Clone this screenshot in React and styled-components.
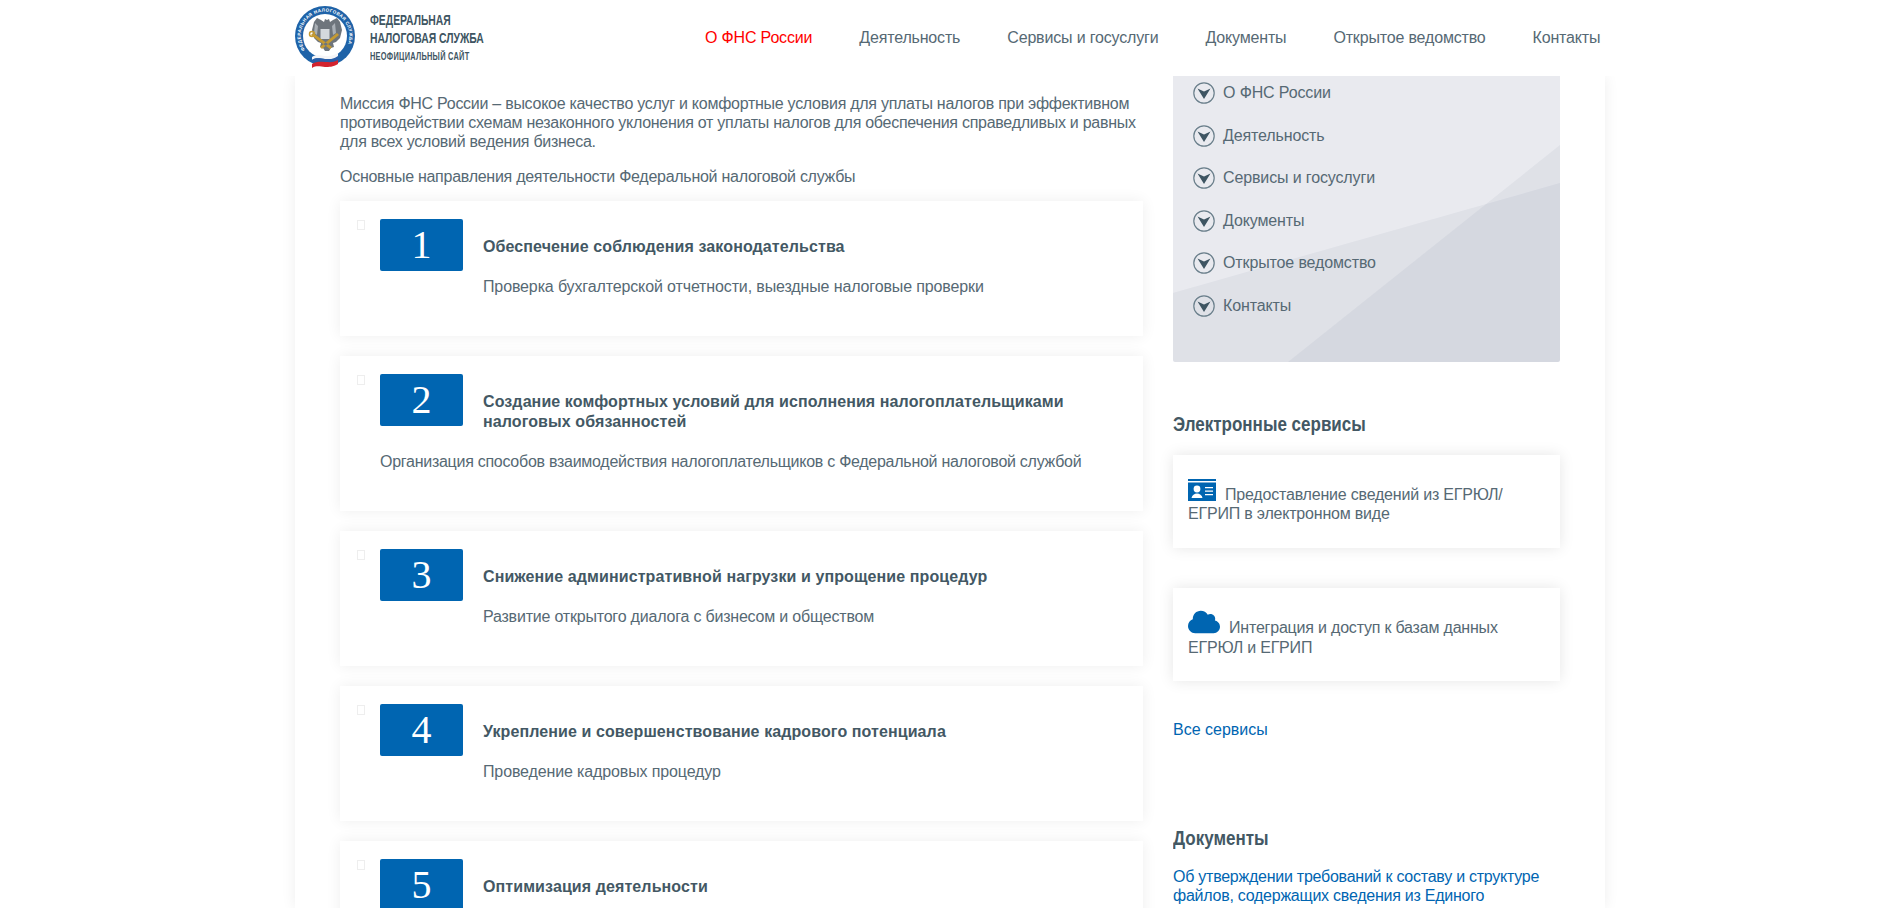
import styled, { createGlobalStyle } from "styled-components";
import { FaCloud } from "react-icons/fa";

const GlobalStyle = createGlobalStyle`
    html, body {
        margin: 0;
        height: 908px;
        overflow: hidden;
        background: #fff;
        font-family: "Liberation Sans", sans-serif;
        font-weight: 400;
        font-size: 16px;
        color: #566974;
    }
`

const Header = styled.header`
    position: relative;
    z-index: 2;
    height: 76px;
    background: #fff;
    display: flex;
    align-items: flex-start;
    padding-left: 295px;
`
const Logo = styled.div`
    display: flex;
    width: 410px;
    padding-top: 5px;
`
const LogoText = styled.div`
    margin: 6px 0 0 15px;
    transform: scaleX(.74);
    transform-origin: left top;
    white-space: nowrap;
    font-weight: 700;
    font-size: 14px;
    line-height: 18px;
    color: #3e5562;
    small {
        display: block;
        margin-top: 3px;
        font-size: 10px;
        line-height: 14px;
        letter-spacing: .36px;
    }
`
const Nav = styled.nav`
    display: flex;
    gap: 47px;
    height: 76px;
    align-items: center;
    letter-spacing: -.17px;
`
const NavItem = styled.a`
    font-size: 16px;
    color: ${p => (p.$active ? "#f00" : "#566974")};
`
const Wrapper = styled.div`
    width: 1220px;
    margin-left: 295px;
    padding: 0 45px;
    height: 832px;
    overflow: hidden;
    display: grid;
    grid-template-columns: 803px 387px;
    column-gap: 30px;
    box-shadow: 0 0 14px rgba(0, 0, 0, .07);
    align-items: start;
`
const Main = styled.main`
    padding-top: 18px;
`
const Lead = styled.p`
    margin: 0 0 15.5px;
    line-height: 19px;
    letter-spacing: -.27px;
`
const Card = styled.section`
    margin-bottom: 20px;
    padding: 18px 15px 40px 40px;
    background: #fff;
    box-shadow: 0 0 14px rgba(0, 0, 0, .07);
    &:first-of-type {
        margin-top: 15px;
    }
`
const Marker = styled.span`
    float: left;
    width: 6px;
    height: 8px;
    margin: 1px 15px 0 -23px;
    border: 1px solid #eee;
`
const NumberBox = styled.div`
    float: left;
    width: 83px;
    height: 52px;
    margin: 0 20px 10px 0;
    border-radius: 2px;
    background: #0065b1;
    color: #fff;
    font-family: "Liberation Serif", serif;
    font-weight: 400;
    font-size: 40px;
    line-height: 52px;
    text-align: center;
`
const CardTitle = styled.h3`
    margin: 0 0 20px;
    padding-top: 18px;
    font-size: 16px;
    font-weight: 700;
    letter-spacing: .1px;
    line-height: 20px;
    color: #435864;
`
const CardText = styled.p`
    margin: 0;
    line-height: 19px;
    letter-spacing: ${p => p.$spacing}px;
`
const Aside = styled.aside``
const MenuPanel = styled.div`
    position: relative;
    height: 286px;
    background: #e9eaef;
    border-radius: 0 0 2px 2px;
    overflow: hidden;
    &::before, &::after {
        content: "";
        position: absolute;
        inset: 0;
        background: rgba(58, 74, 106, .055);
    }
    &::before {
        clip-path: polygon(0 217px, 387px 107px, 387px 286px, 0 286px);
    }
    &::after {
        clip-path: polygon(387px 69px, 115px 286px, 387px 286px);
    }
`
const MenuList = styled.ul`
    position: relative;
    z-index: 1;
    list-style: none;
    margin: -4px 0 0;
    padding: 0 0 0 20px;
    letter-spacing: -.13px;
`
const MenuItem = styled.li`
    display: flex;
    align-items: center;
    gap: 8px;
    height: 42.5px;
`
const Heading = styled.h2`
    margin: ${p => p.$top}px 0 ${p => p.$bottom}px;
    transform: scaleX(.81);
    transform-origin: left center;
    font-size: 21px;
    line-height: 26px;
    font-weight: 700;
    color: #435864;
`
const ServiceCard = styled.div`
    height: 93px;
    box-sizing: border-box;
    margin-bottom: 39px;
    padding: 0 15px;
    display: flex;
    align-items: center;
    background: #fff;
    box-shadow: 0 0 14px rgba(0, 0, 0, .1);
    & + & {
        margin-top: 40px;
    }
`
const ServiceText = styled.div`
    line-height: 19px;
    letter-spacing: -.2px;
    margin-top: -${p => p.$lift}px;
    svg {
        margin-right: 9px;
        color: #0065b1;
    }
`
const BlueLink = styled.a`
    display: block;
    color: #0065b1;
    line-height: 19px;
`
const DocLink = styled(BlueLink)`
    letter-spacing: -.25px;
`

const ChevronIcon = () => (
    <svg width="22" height="22" viewBox="0 0 22 22">
        <circle cx="11" cy="11" r="10.2" fill="none" stroke="#6a7f8b" strokeWidth="1.2" />
        <path d="M4.5 6.5 L11 9.5 L17.5 6.5 L11 17 Z" fill="#3e5562" />
    </svg>
)

const IdCardIcon = () => (
    <svg width="28" height="22" viewBox="0 0 28 22" style={{ verticalAlign: "-1px" }}>
        <path d="M0 0h28v2H0z M0 3.5h28V22H0z" fill="#0065b1" />
        <circle cx="9" cy="10" r="3.4" fill="#fff" />
        <path d="M3.5 19c.5-3 3-4.5 5.5-4.5s5 1.500 5.500 4.500z" fill="#fff" />
        <path d="M17 8h8v1.300h-8z M17 11.500h8v1.300h-8z M17 15h8v1.300h-8z" fill="#fff" />
    </svg>
)

const Emblem = () => (
    <svg width="60" height="64" viewBox="0 0 60 64">
        <defs>
            <path id="ring" d="M10.100 44.900 A24.300 24.300 0 1 1 49.900 44.900" />
        </defs>
        <circle cx="30" cy="31" r="30" fill="#1f63a8" />
        <circle cx="30" cy="31" r="22" fill="#fff" />
        <text fontFamily="Liberation Sans, sans-serif" fontSize="4.600" fontWeight="700" fill="#fff" letterSpacing=".4">
            <textPath href="#ring">ФЕДЕРАЛЬНАЯ НАЛОГОВАЯ СЛУЖБА</textPath>
        </text>
        <path d="M30 12l2 3 2-1 1 3 3-2 4-2 3 4 2 8-2 8-4 4-3 1 1 4-3 1-2 3-4 0-2-3-3-1 1-4-3-1-4-4-2-8 2-8 3-4 4 2 3 2 1-3 2 1z" fill="#6e757c" />
        <path d="M20 18l3 3-1 9-3-2z M40 18l-3 3 1 9 3-2z" fill="#a9afb5" />
        <rect x="25.500" y="24" width="9" height="10" fill="#d4d9dd" />
        <path d="M16 30l19 14 2-2-19-14z M44 30L27 44l-2-2 17-14z" fill="#c59a32" />
        <circle cx="17" cy="29" r="2.500" fill="none" stroke="#c59a32" strokeWidth="1.500" />
        <g transform="translate(0 2)">
            <path d="M17 50c5-3 9-1 13-1s8 0 13-3v4c-5 3-9 2-13 2s-8-2-13 1z" fill="#f5f5f7" />
            <path d="M17 53c5-3 9-1 13-1s8 1 13-3v4c-5 3-9 2-13 2s-8-2-13 1z" fill="#2a5ea8" />
            <path d="M17 57c5-3 9-2 13-2s8 1 13-2v4c-5 3-9 3-13 3s-8-2-13 1z" fill="#d3232e" />
        </g>
    </svg>
)

const navItems = ["О ФНС России", "Деятельность", "Сервисы и госуслуги", "Документы", "Открытое ведомство", "Контакты"];

const directions = [
    { title: "Обеспечение соблюдения законодательства", text: "Проверка бухгалтерской отчетности, выездные налоговые проверки", spacing: -.13 },
    { title: "Создание комфортных условий для исполнения налогоплательщиками налоговых обязанностей", text: "Организация способов взаимодействия налогоплательщиков с Федеральной налоговой службой", spacing: -.27 },
    { title: "Снижение административной нагрузки и упрощение процедур", text: "Развитие открытого диалога с бизнесом и обществом", spacing: -.2 },
    { title: "Укрепление и совершенствование кадрового потенциала", text: "Проведение кадровых процедур", spacing: -.13 },
    { title: "Оптимизация деятельности", text: "", spacing: 0 },
];

const App = () => {
    return (
        <>
            <GlobalStyle />
            <Header>
                <Logo>
                    <Emblem />
                    <LogoText>
                        ФЕДЕРАЛЬНАЯ<br />
                        НАЛОГОВАЯ СЛУЖБА
                        <small>НЕОФИЦИАЛЬНЫЙ САЙТ</small>
                    </LogoText>
                </Logo>
                <Nav>
                    {navItems.map((item, i) => (
                        <NavItem key={item} $active={i === 0}>{item}</NavItem>
                    ))}
                </Nav>
            </Header>
            <Wrapper>
                <Main>
                    <Lead>
                        Миссия ФНС России – высокое качество услуг и комфортные условия для уплаты налогов при эффективном
                        противодействии схемам незаконного уклонения от уплаты налогов для обеспечения справедливых и равных
                        для всех условий ведения бизнеса.
                    </Lead>
                    <Lead>Основные направления деятельности Федеральной налоговой службы</Lead>
                    {directions.map((item, i) => (
                        <Card key={item.title}>
                            <Marker />
                            <NumberBox>{i + 1}</NumberBox>
                            <CardTitle>{item.title}</CardTitle>
                            <CardText $spacing={item.spacing}>{item.text}</CardText>
                        </Card>
                    ))}
                </Main>
                <Aside>
                    <MenuPanel>
                        <MenuList>
                            {navItems.map(item => (
                                <MenuItem key={item}>
                                    <ChevronIcon />
                                    {item}
                                </MenuItem>
                            ))}
                        </MenuList>
                    </MenuPanel>
                    <Heading $top={49} $bottom={18}>Электронные сервисы</Heading>
                    <ServiceCard>
                        <ServiceText $lift={1}>
                            <IdCardIcon />
                            Предоставление сведений из ЕГРЮЛ/ ЕГРИП в электронном виде
                        </ServiceText>
                    </ServiceCard>
                    <ServiceCard>
                        <ServiceText $lift={7}>
                            <FaCloud size={32} style={{ verticalAlign: "-5px" }} />
                            Интеграция и доступ к базам данных ЕГРЮЛ и ЕГРИП
                        </ServiceText>
                    </ServiceCard>
                    <BlueLink>Все сервисы</BlueLink>
                    <Heading $top={86} $bottom={16}>Документы</Heading>
                    <DocLink>
                        Об утверждении требований к составу и структуре файлов, содержащих сведения из Единого
                    </DocLink>
                </Aside>
            </Wrapper>
        </>
    )
}

export default App
